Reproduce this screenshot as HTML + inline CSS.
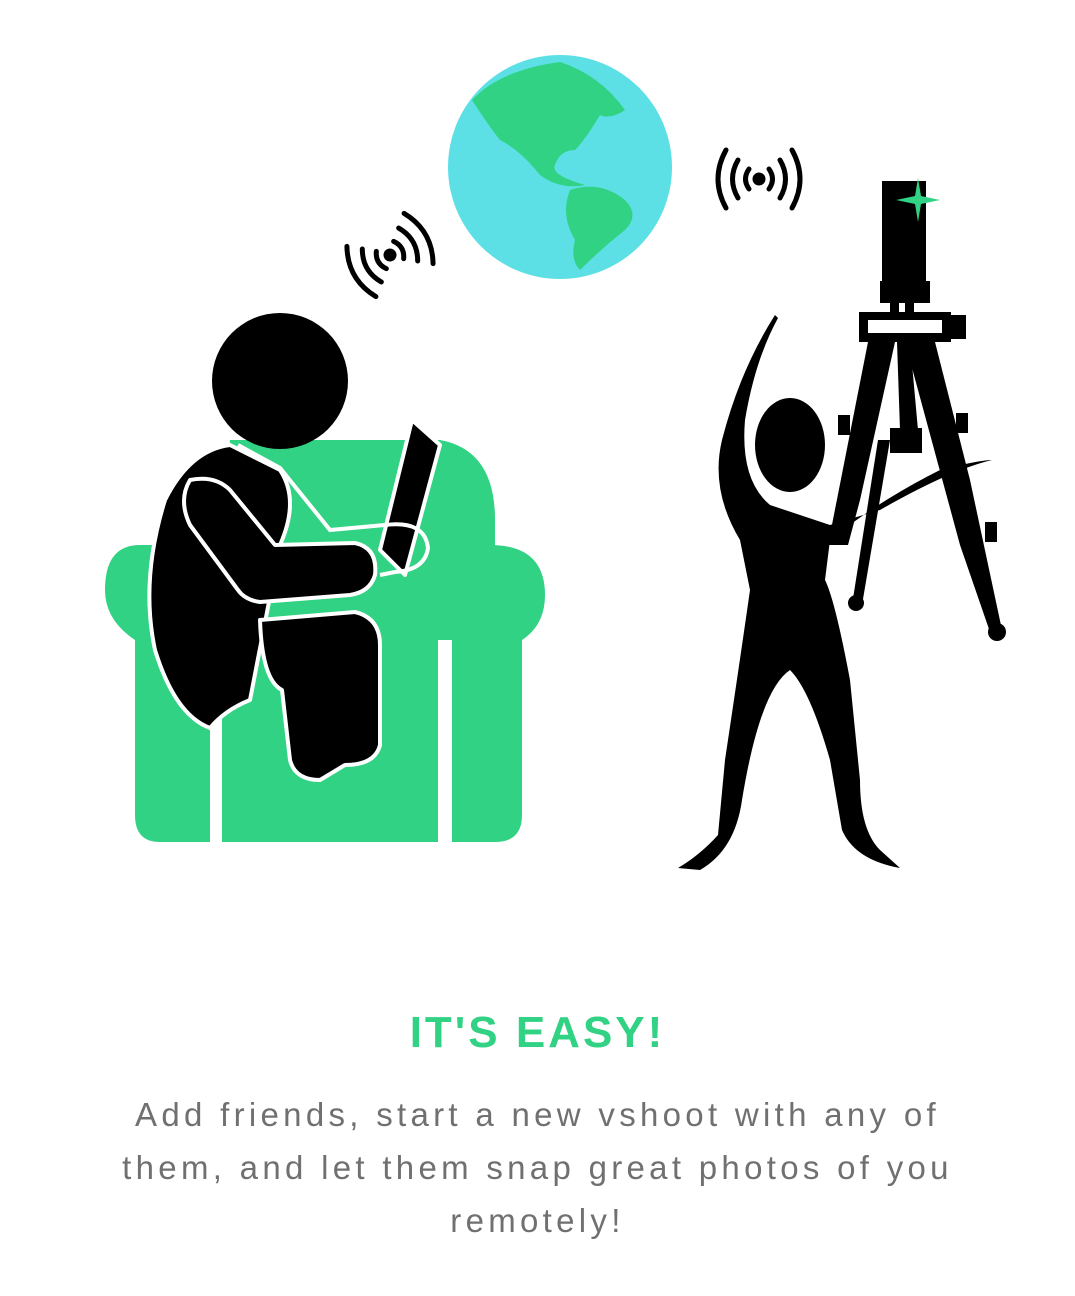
<!DOCTYPE html>
<html><head><meta charset="utf-8"><style>
html,body{margin:0;padding:0;background:#fff;width:1075px;height:1296px;overflow:hidden}
svg{position:absolute;left:0;top:0}
h1{position:absolute;top:1008px;left:0;width:1075px;margin:0;text-align:center;color:#31d283;font:bold 44px "Liberation Sans",sans-serif;letter-spacing:3px}
p{position:absolute;top:1088px;left:0;width:1075px;margin:0;text-align:center;color:#707070;font:33px/53px "Liberation Sans",sans-serif;letter-spacing:4.3px;white-space:nowrap}
</style></head><body>
<svg width="1075" height="1296" viewBox="0 0 1075 1296">
<circle cx="560" cy="167" r="112" fill="#5ce0e6"/>
<path d="M472 100 Q500 70 560 62 Q600 75 625 110 Q610 120 600 115 Q585 140 575 150 Q560 150 555 165 Q550 175 585 185 Q560 190 540 175 Q520 150 500 140 Q488 125 472 100Z" fill="#31d283"/>
<path d="M570 190 Q600 180 625 200 Q640 215 625 230 Q600 250 580 270 Q570 260 575 240 Q560 215 570 190Z" fill="#31d283"/>
<g fill="none" stroke="#000" stroke-width="5" stroke-linecap="round">
<circle cx="759" cy="179" r="4" fill="#000"/>
<path d="M749 169 Q742 179 749 189 M769 169 Q776 179 769 189 M738 160 Q727 179 738 198 M780 160 Q791 179 780 198 M726 150 Q710 179 726 208 M792 150 Q808 179 792 208"/>
<g transform="rotate(-30 390 255)">
<circle cx="390" cy="255" r="4" fill="#000"/>
<path d="M380 245 Q373 255 380 265 M400 245 Q407 255 400 265 M369 236 Q358 255 369 274 M411 236 Q422 255 411 274 M357 226 Q341 255 357 284 M423 226 Q439 255 423 284"/>
</g></g>
<g fill="#31d283">
<path d="M230 440 L440 440 Q495 450 495 520 L495 640 L220 640Z"/>
<path d="M140 545 L190 545 Q210 548 210 580 L210 842 L160 842 Q135 842 135 815 L135 640 Q105 620 105 590 Q105 545 140 545Z"/>
<path d="M490 545 Q545 545 545 595 Q545 625 522 640 L522 815 Q522 842 495 842 L452 842 L452 580 Q455 545 490 545Z"/>
<rect x="222" y="640" width="216" height="202"/>
</g>
<g fill="#000" stroke="#fff" stroke-width="4" stroke-linejoin="round">
<circle cx="280" cy="381" r="68" stroke="none"/>
<path d="M165 500 Q190 450 230 445 L280 470 Q300 500 280 545 L250 700 Q225 710 210 728 Q175 715 155 650 Q140 580 165 500Z"/>
<path d="M190 480 Q215 475 230 490 L275 545 L355 543 Q378 548 375 575 Q370 592 350 595 L260 602 Q245 600 238 590 L190 525 Q178 500 190 480Z"/>
<path d="M260 620 L355 612 Q380 618 380 645 L380 745 Q375 765 345 765 L320 780 Q295 780 290 760 L282 690 Q262 680 260 620Z"/>
<path d="M412 420 L440 445 L405 575 L380 550Z"/>
</g>
<path d="M238 445 L280 468 L330 530 L385 525 Q425 520 428 548 Q425 570 395 572 L380 575" fill="none" stroke="#fff" stroke-width="4"/>
<g fill="#000">
<ellipse cx="790" cy="445" rx="35" ry="47"/>
<path d="M775 315 Q740 370 722 440 Q710 490 740 540 L750 590 Q740 660 725 760 L718 835 Q700 855 678 868 L700 870 Q735 850 742 800 Q760 690 790 670 Q810 690 830 760 L842 830 Q855 860 900 868 L880 850 Q860 830 860 780 L850 680 Q835 600 825 580 L830 540 Q880 500 940 470 Q980 460 992 460 Q950 470 880 510 L830 525 Q800 515 770 505 Q740 480 745 420 Q755 360 778 318Z"/>
</g>
<g fill="#000">
<rect x="882" y="181" width="44" height="100"/>
<rect x="880" y="281" width="50" height="22"/>
<rect x="890" y="302" width="9" height="12"/><rect x="905" y="302" width="9" height="12"/>
<rect x="859" y="312" width="92" height="30"/>
<rect x="950" y="315" width="16" height="24"/>
<polygon points="868,342 895,342 860,500 848,545 828,545"/>
<polygon points="878,440 890,440 862,605 852,605"/>
<polygon points="905,342 935,342 970,480 1002,630 990,632 960,545"/>
<polygon points="897,342 910,342 918,430 900,430"/>
<rect x="890" y="428" width="32" height="25"/>
<rect x="838" y="415" width="12" height="20"/><rect x="956" y="413" width="12" height="20"/><rect x="985" y="522" width="12" height="20"/>
<circle cx="856" cy="603" r="8"/><circle cx="997" cy="632" r="9"/>
</g>
<rect x="868" y="320" width="74" height="13" fill="#fff"/>
<g fill="#31d283"><polygon points="918,178 921,196 940,200 921,204 918,222 915,204 896,200 915,196"/></g>
</svg>
<h1>IT'S EASY!</h1>
<p>Add friends, start a new vshoot with any of<br>them, and let them snap great photos of you<br>remotely!</p>
</body></html>
